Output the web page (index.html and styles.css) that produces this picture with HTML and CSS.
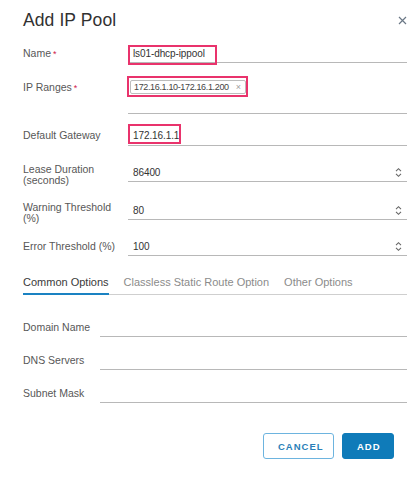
FILE: index.html
```html
<!DOCTYPE html>
<html>
<head>
<meta charset="utf-8">
<link rel="stylesheet" href="styles.css">
</head>
<body>
<div class="modal">
  <div class="header">
    <h1 class="title">Add IP Pool</h1>
    <svg class="close" width="9" height="9" viewBox="0 0 9 9"><path d="M1 1 L8 8 M8 1 L1 8" stroke="#6b7886" stroke-width="1.2" fill="none"/></svg>
  </div>

  <div class="row r-name">
    <div class="label">Name<span class="req">*</span></div>
    <div class="field"><span class="val">ls01-dhcp-ippool</span><span class="mark mark-name"></span></div>
  </div>

  <div class="row r-ip">
    <div class="label lh20">IP Ranges<span class="req">*</span></div>
    <div class="field tall"><span class="chip">172.16.1.10-172.16.1.200<span class="chip-x">×</span></span><span class="mark mark-ip"></span></div>
  </div>

  <div class="row r-gw">
    <div class="label lh19">Default Gateway</div>
    <div class="field lh19"><span class="val">172.16.1.1</span><span class="mark mark-gw"></span></div>
  </div>

  <div class="row r-lease">
    <div class="label two">Lease Duration (seconds)</div>
    <div class="field"><span class="val">86400</span><svg class="spin" width="7" height="11" viewBox="0 0 7 11"><path d="M1 4.2 L3.5 1.7 L6 4.2 M1 6.8 L3.5 9.3 L6 6.8" stroke="#666" stroke-width="1.1" fill="none"/></svg></div>
  </div>

  <div class="row r-warn">
    <div class="label two">Warning Threshold (%)</div>
    <div class="field"><span class="val">80</span><svg class="spin" width="7" height="11" viewBox="0 0 7 11"><path d="M1 4.2 L3.5 1.7 L6 4.2 M1 6.8 L3.5 9.3 L6 6.8" stroke="#666" stroke-width="1.1" fill="none"/></svg></div>
  </div>

  <div class="row r-err">
    <div class="label">Error Threshold (%)</div>
    <div class="field"><span class="val">100</span><svg class="spin" width="7" height="11" viewBox="0 0 7 11"><path d="M1 4.2 L3.5 1.7 L6 4.2 M1 6.8 L3.5 9.3 L6 6.8" stroke="#666" stroke-width="1.1" fill="none"/></svg></div>
  </div>

  <div class="tabs">
    <div class="tab active">Common Options</div>
    <div class="tab">Classless Static Route Option</div>
    <div class="tab">Other Options</div>
  </div>

  <div class="row sub r-domain">
    <div class="label">Domain Name</div>
    <div class="field"></div>
  </div>
  <div class="row sub r-next">
    <div class="label">DNS Servers</div>
    <div class="field"></div>
  </div>
  <div class="row sub r-next">
    <div class="label">Subnet Mask</div>
    <div class="field"></div>
  </div>

  <div class="footer">
    <button class="btn btn-outline">CANCEL</button>
    <button class="btn btn-primary">ADD</button>
  </div>
</div>
</body>
</html>
```

FILE: styles.css
```css
* { box-sizing: border-box; }
html, body {
  margin: 0;
  padding: 0;
  background: #fff;
}
body {
  font-family: "Liberation Sans", Arial, sans-serif;
  color: #565656;
}
.modal {
  width: 419px;
  height: 479px;
  padding: 0 12px 0 23px;
}
.header {
  display: flex;
  justify-content: space-between;
  align-items: center;
  height: 38px;
  padding-top: 1px;
}
.title {
  margin: 0;
  font-size: 17.5px;
  font-weight: normal;
  color: #313131;
  line-height: 24px;
  letter-spacing: 0.1px;
}
.close {
  margin-right: 0;
  margin-top: 1px;
}
.row {
  display: flex;
  align-items: flex-start;
}
.label {
  width: 105px;
  flex: none;
  padding-right: 8px;
  font-size: 10.5px;
  line-height: 18px;
  color: #575757;
}
.label.lh20 { line-height: 20px; }
.label.lh19 { line-height: 19px; }
.label.two {
  line-height: 10.5px;
  padding-top: 1px;
  height: 19px;
}
.req {
  color: #d0214b;
  margin-left: 2px;
  font-size: 9px;
}
.field {
  position: relative;
  flex: 1;
  display: flex;
  align-items: center;
  height: 19px;
  border-bottom: 1px solid #b8b8b8;
  padding-left: 5px;
  padding-right: 5px;
  font-size: 10px;
  color: #333;
}
.field.lh19 { height: 20px; }
.field.tall {
  height: 37px;
  align-items: flex-start;
  padding-left: 2px;
  padding-top: 3px;
}
.val { flex: 1; letter-spacing: -0.1px; }
.spin { flex: none; }
.chip {
  display: inline-flex;
  align-items: center;
  height: 14px;
  padding: 0 4px 0 3px;
  border: 1px solid #bdbdbd;
  border-radius: 2px;
  font-size: 9px;
  letter-spacing: -0.35px;
  color: #444;
}
.chip-x {
  margin-left: 7px;
  color: #a0a0a0;
  font-size: 9px;
  letter-spacing: 0;
}
.mark {
  position: absolute;
  border: 2px solid #e9336c;
}
.mark-name { left: 0; top: 1px; width: 89px; height: 20px; }
.mark-ip { left: -1px; top: -1px; width: 121px; height: 21px; }
.mark-gw { left: 0; top: -2px; width: 53px; height: 20px; }

.r-name { margin-top: 6px; }
.r-ip { margin-top: 14px; }
.r-gw { margin-top: 12px; }
.r-lease { margin-top: 17px; }
.r-warn { margin-top: 19px; }
.r-err { margin-top: 17px; }

.tabs {
  display: flex;
  gap: 15px;
  margin-top: 14px;
  box-shadow: inset 0 -1px 0 #cfcfcf;
}
.tab {
  font-size: 11px;
  line-height: 14px;
  padding-top: 5px;
  padding-bottom: 4px;
  border-bottom: 2px solid transparent;
  color: #8b8b8b;
}
.tab.active {
  color: #3a3a3a;
  border-bottom-color: #1a82c2;
}
.sub .label { width: 77px; }
.r-domain { margin-top: 23px; }
.r-next { margin-top: 14px; }

.footer {
  display: flex;
  justify-content: flex-end;
  gap: 8px;
  margin-top: 30px;
  padding-right: 13px;
}
.btn {
  height: 26px;
  padding: 0 14px;
  border-radius: 3px;
  font-family: "Liberation Sans", Arial, sans-serif;
  font-size: 9.5px;
  font-weight: bold;
  letter-spacing: 1px;
  cursor: pointer;
}
.btn-outline {
  width: 71px;
  background: #fff;
  border: 1px solid #6db4df;
  color: #2a7fb8;
}
.btn-primary {
  width: 52px;
  background: #0f7bb9;
  border: 1px solid #0f7bb9;
  color: #fff;
}
```
